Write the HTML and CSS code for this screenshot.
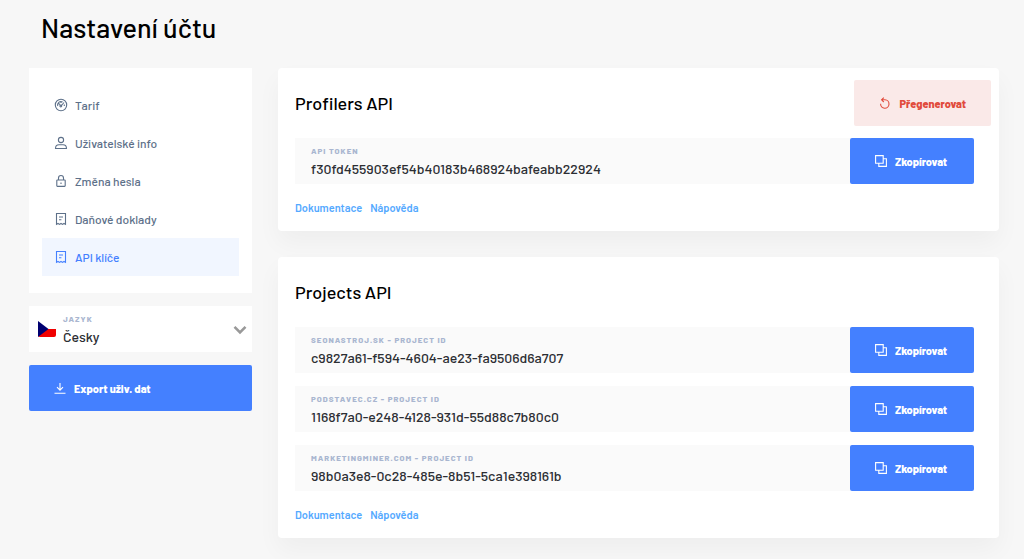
FILE: index.html
```html
<!DOCTYPE html>
<html lang="cs">
<head>
<meta charset="utf-8">
<meta name="viewport" content="width=device-width, initial-scale=1">
<title>Nastavení účtu</title>
<link rel="stylesheet" href="styles.css">
</head>
<body>
<svg class="sprite" aria-hidden="true">
  <symbol id="gauge" viewBox="0 0 14 14"><circle cx="7" cy="7" r="5.7"/><path d="M3.7 8A3.4 3.4 0 0 1 8.6 4M10.3 6.4V8M7 8L10 4.5M4.5 5.5L6 6.5M7 3.6V5"/><circle cx="6.8" cy="8" r=".9"/></symbol>
  <symbol id="user" viewBox="0 0 14 14"><circle cx="7" cy="4" r="2.6"/><path d="M1.5 12.5C1.5 10 3 8.8 5 8.8H9C11 8.8 12.5 10 12.5 12.5Z"/></symbol>
  <symbol id="lock" viewBox="0 0 14 14"><rect x="2.8" y="6" width="8.4" height="6.4" rx=".6"/><path d="M4.5 6V4A2.5 2.5 0 0 1 9.5 4V6M7 8.4V10"/></symbol>
  <symbol id="receipt" viewBox="0 0 14 14"><path d="M2.5 12.4V1.5H11.5V12.4L10 11.5L8.5 12.4L7 11.5L5.5 12.4L4 11.5ZM5 5H9M5 7.7H7.4"/></symbol>
  <symbol id="copy" viewBox="0 0 12 12"><path d="M.6 .6H8.2V8.2H.6ZM8.2 3.8H11.4V11.4H3.8V8.2"/></symbol>
  <symbol id="reload" viewBox="0 0 12 12"><path d="M1.6 6.8A4.2 4.2 0 1 0 6 2.8H2.6M4.8 .6L2.6 2.8L4.8 5"/></symbol>
  <symbol id="download" viewBox="0 0 12 12"><path d="M6 1V8M3 5.2L6 8.2L9 5.2M.5 11.2H11.5"/></symbol>
</svg>
<div class="page">
  <h1 class="page-title">Nastavení účtu</h1>
  <div class="layout">
    <aside class="sidebar">
      <nav class="menu">
        <a class="menu-item" href="#"><svg class="menu-icon"><use href="#gauge"/></svg>Tarif</a>
        <a class="menu-item" href="#"><svg class="menu-icon"><use href="#user"/></svg>Uživatelské info</a>
        <a class="menu-item" href="#"><svg class="menu-icon"><use href="#lock"/></svg>Změna hesla</a>
        <a class="menu-item" href="#"><svg class="menu-icon"><use href="#receipt"/></svg>Daňové doklady</a>
        <a class="menu-item active" href="#" aria-current="page"><svg class="menu-icon"><use href="#receipt"/></svg>API klíče</a>
      </nav>
      <div class="language">
        <svg class="flag" viewBox="0 0 18 16"><path fill="#f00000" d="M0 8H18V14A2 2 0 0 1 16 16H2A2 2 0 0 1 0 14Z"/><path fill="#000070" d="M0 0L10.5 8L0 16Z"/></svg>
        <div class="field">
          <label class="label" for="lang">Jazyk</label>
          <select class="value" id="lang"><option>Česky</option></select>
        </div>
        <svg class="chevron" viewBox="0 0 14 12"><path d="M1.5 3.8L7 9.4L12.5 3.8"/></svg>
      </div>
      <button class="button export" type="button"><svg class="icon"><use href="#download"/></svg>Export uživ. dat</button>
    </aside>
    <main class="cards">
      <section class="card">
        <header class="card-head">
          <h2 class="card-title">Profilers API</h2>
          <button class="button danger" type="button"><svg class="icon"><use href="#reload"/></svg>Přegenerovat</button>
        </header>
        <div class="rows">
          <div class="row">
            <div class="field"><label class="label" for="token">API token</label><input class="value" id="token" readonly value="f30fd455903ef54b40183b468924bafeabb22924"></div>
            <button class="button" type="button"><svg class="icon"><use href="#copy"/></svg>Zkopírovat</button>
          </div>
        </div>
        <footer class="links"><a class="link" href="#">Dokumentace</a><a class="link" href="#">Nápověda</a></footer>
      </section>
      <section class="card">
        <header class="card-head"><h2 class="card-title">Projects API</h2></header>
        <div class="rows">
          <div class="row">
            <div class="field"><label class="label" for="p1">seonastroj.sk - project ID</label><input class="value" id="p1" readonly value="c9827a61-f594-4604-ae23-fa9506d6a707"></div>
            <button class="button" type="button"><svg class="icon"><use href="#copy"/></svg>Zkopírovat</button>
          </div>
          <div class="row">
            <div class="field"><label class="label" for="p2">podstavec.cz - project ID</label><input class="value" id="p2" readonly value="1168f7a0-e248-4128-931d-55d88c7b80c0"></div>
            <button class="button" type="button"><svg class="icon"><use href="#copy"/></svg>Zkopírovat</button>
          </div>
          <div class="row">
            <div class="field"><label class="label" for="p3">marketingminer.com - project ID</label><input class="value" id="p3" readonly value="98b0a3e8-0c28-485e-8b51-5ca1e398161b"></div>
            <button class="button" type="button"><svg class="icon"><use href="#copy"/></svg>Zkopírovat</button>
          </div>
        </div>
        <footer class="links"><a class="link" href="#">Dokumentace</a><a class="link" href="#">Nápověda</a></footer>
      </section>
    </main>
  </div>
</div>
</body>
</html>
```
FILE: styles.css
```css
* { box-sizing: border-box; }
body {
  margin: 0;
  background: #f7f7f7;
  color: #000;
  font-family: Barlow, Roboto, "Liberation Sans", sans-serif;
  font-weight: 500;
}
.sprite { display: none; }
svg { flex: none; fill: none; stroke: currentColor; }
.page { padding: 11px 25px 21px 29px; }
.page-title { margin: 0 0 25px 12px; font-size: 27px; line-height: 32px; font-weight: 500; }
.layout { display: grid; grid-template-columns: 223px minmax(0, 1fr); gap: 26px; align-items: start; }
.sidebar { display: flex; flex-direction: column; gap: 13px; }
.menu { padding: 18px 13px 17px; background: #fff; }
.menu-item {
  display: flex;
  align-items: center;
  gap: 7px;
  height: 38px;
  padding: 0 12px;
  color: #5d7089;
  font-size: 12px;
  text-decoration: none;
}
.menu-item.active { background: #f1f6ff; color: #4480ff; }
.menu-icon { width: 14px; height: 14px; stroke-width: 1.1; }
.language { position: relative; display: flex; align-items: center; height: 46px; background: #fff; }
.flag { position: absolute; left: 9px; width: 18px; height: 16px; stroke: none; pointer-events: none; }
.chevron { position: absolute; right: 5px; width: 14px; height: 12px; color: #999; stroke-width: 2.6; pointer-events: none; }
.field { display: flex; flex: 1; flex-direction: column; min-width: 0; height: 46px; padding: 8px 0 0 16px; background: #fafafa; }
.language .field { padding-left: 34px; background: #fff; }
.label { color: #a9b6d0; font-size: 8px; line-height: 10px; font-weight: 800; letter-spacing: 1px; text-transform: uppercase; }
.value {
  width: 100%;
  height: 24px;
  padding: 0;
  border: 0;
  outline: 0;
  appearance: none;
  background: transparent;
  color: #2c2e33;
  font: inherit;
  font-size: 14px;
}
.button {
  display: flex;
  align-items: center;
  gap: 8px;
  height: 46px;
  padding: 0 25px;
  border: 0;
  border-radius: 2px;
  background: #4480ff;
  color: #fff;
  font: inherit;
  font-size: 11px;
  font-weight: 800;
}
.icon { width: 12px; height: 12px; stroke-width: 1.1; }
.danger { background: #fae9e8; color: #e14b3c; }
.cards { display: flex; flex-direction: column; gap: 26px; }
.card { padding: 12px 25px 15px 17px; border-radius: 4px; background: #fff; box-shadow: 0 12px 24px rgba(0, 0, 0, .04); }
.card-head { display: flex; align-items: center; justify-content: space-between; min-height: 46px; margin: 0 -17px 12px 0; }
.card-title { margin: 0; font-size: 18px; line-height: 24px; font-weight: 500; }
.rows { display: flex; flex-direction: column; gap: 13px; }
.row { display: flex; }
.row .button { width: 124px; }
.links { display: flex; gap: 8px; margin-top: 16px; font-size: 11px; line-height: 16px; font-weight: 600; }
.link { color: #54a9ff; text-decoration: none; }
```
